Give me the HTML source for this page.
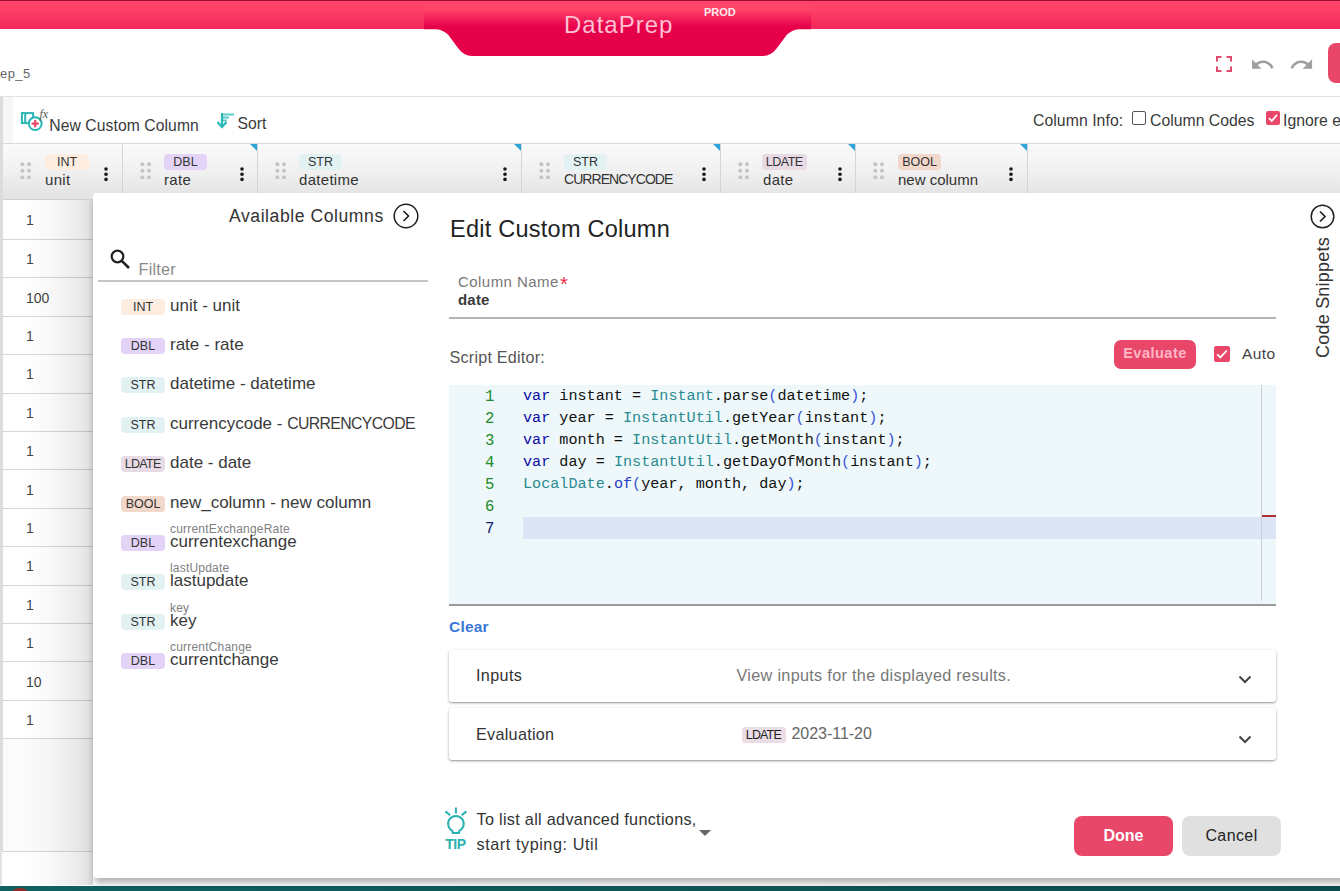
<!DOCTYPE html>
<html><head><meta charset="utf-8">
<style>
*{box-sizing:border-box;margin:0;padding:0}
html,body{width:1340px;height:891px;overflow:hidden;background:#fff;font-family:"Liberation Sans",sans-serif;color:#333;position:relative}
.a{position:absolute;white-space:nowrap}
#topbar{left:0;top:0;width:1340px;height:29.3px;background:linear-gradient(#ff466a,#ff4066 30%,#f0285a);border-top:1px solid #9c0a30}
#tab{left:424px;top:0;width:387px;height:57px}
#hdrline{left:0;top:96px;width:1340px;height:1px;background:#e3e3e3}
#leftstrip{left:0;top:97px;width:3px;height:755px;background:#dcdcdc}
#tbstrip{left:3px;top:97px;width:10px;height:46px;background:#f6f6f6}
.tb{font-size:15px;color:#3a3a3a}
#colhdr{left:3px;top:143px;width:1337px;height:57px;background:linear-gradient(#fafafa 0,#f4f4f4 18px,#ececec 36px,#e4e4e4 50px);border-top:1px solid #dadada;border-bottom:1px solid #d0d0d0}
.hc{position:absolute;top:0;height:56px;border-right:1px solid #d4d4d4}
.badge{position:absolute;height:16px;line-height:16.5px;font-size:12.5px;text-align:center;border-radius:4px;color:#333}
.int{background:#fcede0}.dbl{background:#e2d3f7}.str{background:#e2f1f2}.ldate{background:#e9dbe5}.bool{background:#f2d7cb}
.hname{position:absolute;top:27px;font-size:15px;color:#333;letter-spacing:0.3px}
.drag{position:absolute;top:17.2px}
.kebab{position:absolute;top:23px}
.tri{position:absolute;top:0;right:0;width:0;height:0;border-top:7px solid #2ea6d8;border-left:7px solid transparent}
.rline{position:absolute;left:3px;width:100px;height:1px;background:#d6d6d6}
.rv{position:absolute;left:26px;font-size:14px;color:#444}
#modal{left:93px;top:193px;width:1300px;height:685px;background:#fff;border-radius:4px 0 0 4px;box-shadow:0 7px 6px -2px rgba(0,0,0,.3)}
.li{position:absolute;left:0;font-size:17px;color:#333}
.lb{position:absolute;left:121px;width:44px;height:16px;line-height:17px;font-size:12.5px;text-align:center;border-radius:4px;color:#333}
.lt{position:absolute;left:170px;font-size:17px;color:#3a3a3a;margin-top:0.8px}
.ls{position:absolute;left:170px;font-size:12px;color:#808080;margin-top:1px;letter-spacing:0.2px}
.code{font-family:"Liberation Mono",monospace;font-size:15px;color:#111}
.ln{position:absolute;left:485px;font-family:"Liberation Mono",monospace;font-size:15.6px;color:#23892c}
.cl{position:absolute;left:523px;font-family:"Liberation Mono",monospace;font-size:15.15px;color:#111;white-space:pre}
.k{color:#0b0ba8}.t{color:#2b8a8f}.p{color:#3b55d6}
.acc{position:absolute;left:449px;width:827px;height:52px;background:#fff;border-radius:3px;box-shadow:0 1px 3px rgba(0,0,0,.32),0 1px 1px rgba(0,0,0,.14)}
</style></head><body>
<div id="topbar" class="a"></div>
<svg class="a" id="tab" width="387" height="57" viewBox="0 0 387 57">
<defs><linearGradient id="tg" x1="0" y1="0" x2="0" y2="57" gradientUnits="userSpaceOnUse"><stop offset="0" stop-color="#ff466a"/><stop offset="0.16" stop-color="#ff4669"/><stop offset="0.47" stop-color="#e6004b"/><stop offset="1" stop-color="#e5004a"/></linearGradient></defs>
<path d="M0 1 H387 V29.3 H376 Q369 29.3 363 34.5 L353 48 Q347 56 339 56 H48 Q40 56 34 48 L24 34.5 Q18 29.3 11 29.3 H0 Z" fill="url(#tg)"/>
</svg>
<div class="a" style="left:564px;top:11px;font-size:24px;color:#ffc0d2;letter-spacing:1px">DataPrep</div>
<div class="a" style="left:704px;top:6px;font-size:11px;font-weight:bold;color:#ffe8ee">PROD</div>
<div class="a" style="left:0;top:66px;font-size:13px;color:#666;letter-spacing:0.4px">ep_5</div>

<!-- header icons -->
<svg class="a" style="left:1216px;top:56px" width="16" height="16" viewBox="0 0 16 16" fill="none" stroke="#e0486c" stroke-width="2">
<path d="M1 5.5V1H5.5M10.5 1H15V5.5M15 10.5V15H10.5M5.5 15H1V10.5"/></svg>
<svg class="a" style="left:1250px;top:52px" width="25.2" height="25.2" viewBox="0 0 24 24"><path fill="#9e9e9e" d="M12.5 8c-2.650 0-5.05.99-6.9 2.6L2 7v9h9l-3.62-3.620c1.39-1.160 3.16-1.880 5.12-1.880 3.54 0 6.55 2.310 7.6 5.5l2.370-.78C21.080 11.030 17.150 8 12.5 8z"/></svg>
<svg class="a" style="left:1289px;top:52px" width="25.2" height="25.2" viewBox="0 0 24 24"><path fill="#9e9e9e" d="M18.4 10.6C16.55 8.99 14.15 8 11.5 8c-4.650 0-8.580 3.030-9.960 7.220L3.9 16c1.050-3.190 4.050-5.5 7.6-5.5 1.950 0 3.730.72 5.120 1.880L13 16h9V7l-3.6 3.6z"/></svg>
<div class="a" style="left:1328px;top:43px;width:30px;height:40px;background:#e8476a;border-radius:8px"></div>

<div id="hdrline" class="a"></div>
<div id="leftstrip" class="a"></div>
<div id="tbstrip" class="a"></div>

<!-- toolbar -->
<svg class="a" style="left:19px;top:107px" width="32" height="28" viewBox="0 0 32 28">
<rect x="2.9" y="6.1" width="11.2" height="10" fill="none" stroke="#2bb5b5" stroke-width="2"/>
<line x1="6.2" y1="6" x2="6.2" y2="16" stroke="#2bb5b5" stroke-width="2"/>
<circle cx="16.2" cy="16.6" r="6.4" fill="#fff" stroke="#2bb5b5" stroke-width="2"/>
<path d="M16.2 13V20.2M12.6 16.6H19.8" stroke="#e8476a" stroke-width="2.2"/>
<text x="20.5" y="10.5" font-family="Liberation Serif" font-style="italic" font-size="12" fill="#555">fx</text>
</svg>
<div class="a tb" style="left:49.3px;top:116.7px;font-size:15.7px;letter-spacing:0.08px">New Custom Column</div>
<svg class="a" style="left:216px;top:112px" width="20" height="17" viewBox="0 0 20 17">
<path d="M6 1V14" stroke="#2bb8b8" stroke-width="2.2"/>
<path d="M1.5 10 L6 15 L10.5 10" fill="none" stroke="#2bb8b8" stroke-width="2.2"/>
<path d="M7 2.5H18M7 5.5H13M7 8.5H11" stroke="#5dcaca" stroke-width="2"/>
</svg>
<div class="a tb" style="left:237.5px;top:114.6px;font-size:15.7px">Sort</div>
<div class="a tb" style="left:1033px;top:112.4px;font-size:15.8px;letter-spacing:0.05px">Column Info:</div>
<div class="a" style="left:1132px;top:111px;width:14px;height:14px;border:1.5px solid #555;border-radius:2px;background:#fff"></div>
<div class="a tb" style="left:1150px;top:112.4px;font-size:15.8px">Column Codes</div>
<svg class="a" style="left:1266px;top:111px" width="14" height="14" viewBox="0 0 14 14"><rect width="14" height="14" rx="2" fill="#e8476a"/><path d="M3 7.2 L5.8 10 L11 3.8" fill="none" stroke="#fff" stroke-width="1.8"/></svg>
<div class="a tb" style="left:1283px;top:112.4px;font-size:15.8px">Ignore e</div>

<!-- column header -->
<div id="colhdr" class="a">
 <div class="hc" style="left:0;width:120px">
  <svg class="drag" style="left:17px" width="12" height="18" viewBox="0 0 12 18" fill="#c4c4c4"><circle cx="2.3" cy="3.2" r="2"/><circle cx="9" cy="3.2" r="2"/><circle cx="2.3" cy="9.7" r="2"/><circle cx="9" cy="9.7" r="2"/><circle cx="2.3" cy="16.4" r="2"/><circle cx="9" cy="16.4" r="2"/></svg>
  <div class="badge int" style="left:42px;top:10px;width:44px">INT</div>
  <div class="hname" style="left:42px">unit</div>
  <svg class="kebab" style="left:100px" width="5" height="15" viewBox="0 0 5 15" fill="#1a1a1a"><circle cx="3" cy="2" r="1.8"/><circle cx="3" cy="7.2" r="1.8"/><circle cx="3" cy="12.4" r="1.8"/></svg>
 </div>
 <div class="hc" style="left:120px;width:135px">
  <svg class="drag" style="left:17px" width="12" height="18" viewBox="0 0 12 18" fill="#c4c4c4"><circle cx="2.3" cy="3.2" r="2"/><circle cx="9" cy="3.2" r="2"/><circle cx="2.3" cy="9.7" r="2"/><circle cx="9" cy="9.7" r="2"/><circle cx="2.3" cy="16.4" r="2"/><circle cx="9" cy="16.4" r="2"/></svg>
  <div class="badge dbl" style="left:41px;top:10px;width:43px">DBL</div>
  <div class="hname" style="left:41px">rate</div>
  <svg class="kebab" style="left:116px" width="5" height="15" viewBox="0 0 5 15" fill="#1a1a1a"><circle cx="3" cy="2" r="1.8"/><circle cx="3" cy="7.2" r="1.8"/><circle cx="3" cy="12.4" r="1.8"/></svg>
  <div class="tri"></div>
 </div>
 <div class="hc" style="left:255px;width:264px">
  <svg class="drag" style="left:17px" width="12" height="18" viewBox="0 0 12 18" fill="#c4c4c4"><circle cx="2.3" cy="3.2" r="2"/><circle cx="9" cy="3.2" r="2"/><circle cx="2.3" cy="9.7" r="2"/><circle cx="9" cy="9.7" r="2"/><circle cx="2.3" cy="16.4" r="2"/><circle cx="9" cy="16.4" r="2"/></svg>
  <div class="badge str" style="left:41px;top:10px;width:43px">STR</div>
  <div class="hname" style="left:41px">datetime</div>
  <svg class="kebab" style="left:244px" width="5" height="15" viewBox="0 0 5 15" fill="#1a1a1a"><circle cx="3" cy="2" r="1.8"/><circle cx="3" cy="7.2" r="1.8"/><circle cx="3" cy="12.4" r="1.8"/></svg>
  <div class="tri"></div>
 </div>
 <div class="hc" style="left:519px;width:199px">
  <svg class="drag" style="left:17px" width="12" height="18" viewBox="0 0 12 18" fill="#c4c4c4"><circle cx="2.3" cy="3.2" r="2"/><circle cx="9" cy="3.2" r="2"/><circle cx="2.3" cy="9.7" r="2"/><circle cx="9" cy="9.7" r="2"/><circle cx="2.3" cy="16.4" r="2"/><circle cx="9" cy="16.4" r="2"/></svg>
  <div class="badge str" style="left:42px;top:10px;width:43px">STR</div>
  <div class="hname" style="left:42px;font-size:14px;letter-spacing:-0.95px">CURRENCYCODE</div>
  <svg class="kebab" style="left:179px" width="5" height="15" viewBox="0 0 5 15" fill="#1a1a1a"><circle cx="3" cy="2" r="1.8"/><circle cx="3" cy="7.2" r="1.8"/><circle cx="3" cy="12.4" r="1.8"/></svg>
  <div class="tri"></div>
 </div>
 <div class="hc" style="left:718px;width:135px">
  <svg class="drag" style="left:17px" width="12" height="18" viewBox="0 0 12 18" fill="#c4c4c4"><circle cx="2.3" cy="3.2" r="2"/><circle cx="9" cy="3.2" r="2"/><circle cx="2.3" cy="9.7" r="2"/><circle cx="9" cy="9.7" r="2"/><circle cx="2.3" cy="16.4" r="2"/><circle cx="9" cy="16.4" r="2"/></svg>
  <div class="badge ldate" style="left:41px;top:10px;width:45px;letter-spacing:-0.5px;text-indent:-0.5px">LDATE</div>
  <div class="hname" style="left:42px">date</div>
  <svg class="kebab" style="left:116px" width="5" height="15" viewBox="0 0 5 15" fill="#1a1a1a"><circle cx="3" cy="2" r="1.8"/><circle cx="3" cy="7.2" r="1.8"/><circle cx="3" cy="12.4" r="1.8"/></svg>
  <div class="tri"></div>
 </div>
 <div class="hc" style="left:853px;width:172px">
  <svg class="drag" style="left:17px" width="12" height="18" viewBox="0 0 12 18" fill="#c4c4c4"><circle cx="2.3" cy="3.2" r="2"/><circle cx="9" cy="3.2" r="2"/><circle cx="2.3" cy="9.7" r="2"/><circle cx="9" cy="9.7" r="2"/><circle cx="2.3" cy="16.4" r="2"/><circle cx="9" cy="16.4" r="2"/></svg>
  <div class="badge bool" style="left:42px;top:10px;width:43px">BOOL</div>
  <div class="hname" style="left:42px;letter-spacing:0">new column</div>
  <svg class="kebab" style="left:152px" width="5" height="15" viewBox="0 0 5 15" fill="#1a1a1a"><circle cx="3" cy="2" r="1.8"/><circle cx="3" cy="7.2" r="1.8"/><circle cx="3" cy="12.4" r="1.8"/></svg>
  <div class="tri"></div>
 </div>
</div>

<!-- rows -->
<div class="rline" style="top:239px"></div>
<div class="rv a" style="top:212px">1</div>
<div class="rline" style="top:277px"></div>
<div class="rv a" style="top:251px">1</div>
<div class="rline" style="top:316px"></div>
<div class="rv a" style="top:290px">100</div>
<div class="rline" style="top:354px"></div>
<div class="rv a" style="top:328px">1</div>
<div class="rline" style="top:393px"></div>
<div class="rv a" style="top:366px">1</div>
<div class="rline" style="top:431px"></div>
<div class="rv a" style="top:405px">1</div>
<div class="rline" style="top:469px"></div>
<div class="rv a" style="top:443px">1</div>
<div class="rline" style="top:508px"></div>
<div class="rv a" style="top:482px">1</div>
<div class="rline" style="top:546px"></div>
<div class="rv a" style="top:520px">1</div>
<div class="rline" style="top:585px"></div>
<div class="rv a" style="top:558px">1</div>
<div class="rline" style="top:623px"></div>
<div class="rv a" style="top:597px">1</div>
<div class="rline" style="top:661px"></div>
<div class="rv a" style="top:635px">1</div>
<div class="rline" style="top:700px"></div>
<div class="rv a" style="top:674px">10</div>
<div class="rline" style="top:738px"></div>
<div class="rv a" style="top:712px">1</div>
<div class="a" style="left:3px;top:739px;width:100px;height:112px;background:#fbfbfb"></div>
<div class="rline" style="top:851px"></div>
<div class="a" style="left:0;top:851px;width:2px;height:34px;background:#e2e2e2"></div>
<div class="a" style="left:3px;top:200px;width:90px;height:685px;background:linear-gradient(90deg,rgba(0,0,0,0) 0,rgba(0,0,0,0) 25%,rgba(0,0,0,.025) 50%,rgba(0,0,0,.07) 80%,rgba(0,0,0,.11) 93%,rgba(0,0,0,.17) 100%)"></div>
<div class="a" style="left:0;top:886px;width:1340px;height:5px;background:linear-gradient(90deg,#0f6060,#0c4c4c)"></div>
<div class="a" style="left:12px;top:888px;width:16px;height:10px;border-radius:50%;background:#8a2a2a"></div>
<!-- modal -->
<div id="modal" class="a"></div>
<!-- available columns -->
<div class="a" style="left:229px;top:206px;font-size:17.6px;color:#333;letter-spacing:0.55px">Available Columns</div>
<svg class="a" style="left:393px;top:203px" width="26" height="26" viewBox="0 0 26 26"><circle cx="13" cy="13" r="11.8" fill="none" stroke="#222" stroke-width="1.5"/><path d="M10.5 8 L15.5 13 L10.5 18" fill="none" stroke="#222" stroke-width="1.7"/></svg>
<svg class="a" style="left:110px;top:249px" width="21" height="20" viewBox="0 0 21 20"><circle cx="7.5" cy="7.5" r="5.8" fill="none" stroke="#222" stroke-width="2.2"/><path d="M11.8 11.8 L19 19" stroke="#222" stroke-width="2.6"/></svg>
<div class="a" style="left:138.5px;top:259.7px;font-size:16.2px;color:#8a8a8a;letter-spacing:0.25px">Filter</div>
<div class="a" style="left:98px;top:280px;width:330px;height:2px;background:#c4c4c4"></div>

<div class="lb int" style="top:299px">INT</div><div class="lt a" style="top:295px">unit - unit</div>
<div class="lb dbl" style="top:338px">DBL</div><div class="lt a" style="top:334px">rate - rate</div>
<div class="lb str" style="top:377px">STR</div><div class="lt a" style="top:373px">datetime - datetime</div>
<div class="lb str" style="top:417px">STR</div><div class="lt a" style="top:413px">currencycode - <span style="font-size:15.8px;letter-spacing:-0.62px">CURRENCYCODE</span></div>
<div class="lb ldate" style="top:456px;letter-spacing:-0.7px;text-indent:-0.7px">LDATE</div><div class="lt a" style="top:452px">date - date</div>
<div class="lb bool" style="top:496px">BOOL</div><div class="lt a" style="top:492px">new_column - new column</div>
<div class="lb dbl" style="top:535px">DBL</div><div class="ls a" style="top:521px">currentExchangeRate</div><div class="lt a" style="top:531px">currentexchange</div>
<div class="lb str" style="top:574px">STR</div><div class="ls a" style="top:560px">lastUpdate</div><div class="lt a" style="top:570px">lastupdate</div>
<div class="lb str" style="top:614px">STR</div><div class="ls a" style="top:600px">key</div><div class="lt a" style="top:610px">key</div>
<div class="lb dbl" style="top:653px">DBL</div><div class="ls a" style="top:639px">currentChange</div><div class="lt a" style="top:649px">currentchange</div>

<!-- edit custom column -->
<div class="a" style="left:450px;top:215.6px;font-size:23.5px;color:#222;letter-spacing:0.25px">Edit Custom Column</div>
<div class="a" style="left:458px;top:273px;font-size:15px;color:#777;letter-spacing:0.45px">Column Name</div>
<div class="a" style="left:560px;top:273px;font-size:20px;color:#e8304f">*</div>
<div class="a" style="left:458px;top:291px;font-size:15px;color:#3a3a3a;font-weight:bold;letter-spacing:0.2px">date</div>
<div class="a" style="left:449px;top:317px;width:827px;height:1.5px;background:#b4b4b4"></div>

<div class="a" style="left:449.5px;top:347.9px;font-size:16.2px;color:#555;letter-spacing:0.2px">Script Editor:</div>
<div class="a" style="left:1114px;top:340px;width:82px;height:29px;background:#e8476a;border-radius:7px;color:#ffb6c6;font-weight:bold;font-size:14.5px;text-align:center;line-height:26px;letter-spacing:0.5px">Evaluate</div>
<svg class="a" style="left:1214px;top:346px" width="16" height="16" viewBox="0 0 16 16"><rect width="16" height="16" rx="2" fill="#e8476a"/><path d="M3.2 8.3 L6.4 11.4 L12.8 4.5" fill="none" stroke="#fff" stroke-width="1.8"/></svg>
<div class="a" style="left:1242px;top:345px;font-size:15.5px;color:#444;letter-spacing:0.4px">Auto</div>

<svg class="a" style="left:1310px;top:204px" width="25" height="25" viewBox="0 0 25 25"><circle cx="12.5" cy="12.5" r="11.3" fill="none" stroke="#222" stroke-width="1.5"/><path d="M10 7.5 L15 12.5 L10 17.5" fill="none" stroke="#222" stroke-width="1.7"/></svg>
<div class="a" style="left:1313px;top:358px;transform-origin:0 0;transform:rotate(-90deg);font-size:18px;color:#333;letter-spacing:0.22px">Code Snippets</div>

<!-- code editor -->
<div class="a" style="left:449px;top:385px;width:827px;height:219px;background:#eef8fa"></div>
<div class="a" style="left:523px;top:517px;width:753px;height:22px;background:#dce5f6"></div>
<div class="a" style="left:1261px;top:385px;width:1px;height:216px;background:#c8d0d4"></div>
<div class="a" style="left:1262px;top:515px;width:14px;height:2px;background:#b03030"></div>
<div class="a" style="left:449px;top:604px;width:827px;height:2px;background:#9a9a9a"></div>
<div class="ln" style="top:388px;color:#23892c">1</div>
<div class="cl" style="top:387px"><span class="k">var</span> instant = <span class="t">Instant</span>.parse<span class="p">(</span>datetime<span class="p">)</span>;</div>
<div class="ln" style="top:410px;color:#23892c">2</div>
<div class="cl" style="top:409px"><span class="k">var</span> year = <span class="t">InstantUtil</span>.getYear<span class="p">(</span>instant<span class="p">)</span>;</div>
<div class="ln" style="top:432px;color:#23892c">3</div>
<div class="cl" style="top:431px"><span class="k">var</span> month = <span class="t">InstantUtil</span>.getMonth<span class="p">(</span>instant<span class="p">)</span>;</div>
<div class="ln" style="top:454px;color:#23892c">4</div>
<div class="cl" style="top:453px"><span class="k">var</span> day = <span class="t">InstantUtil</span>.getDayOfMonth<span class="p">(</span>instant<span class="p">)</span>;</div>
<div class="ln" style="top:476px;color:#23892c">5</div>
<div class="cl" style="top:475px"><span class="t">LocalDate</span>.<span style="color:#2a3ac4">of</span><span class="p">(</span>year, month, day<span class="p">)</span>;</div>
<div class="ln" style="top:498px;color:#23892c">6</div>
<div class="ln" style="top:520px;color:#0b216f">7</div>
<div class="a" style="left:449px;top:618px;font-size:15.5px;color:#3a78d8;font-weight:bold;letter-spacing:0.2px">Clear</div>
<div class="acc" style="top:650px"></div>
<div class="a" style="left:476px;top:666px;font-size:16.2px;color:#333;letter-spacing:0.36px">Inputs</div>
<div class="a" style="left:736.5px;top:665.8px;font-size:16.2px;color:#777;letter-spacing:0.32px">View inputs for the displayed results.</div>
<svg class="a" style="left:1238px;top:674.5px" width="14" height="9" viewBox="0 0 14 9"><path d="M1.5 1.5 L7 7 L12.5 1.5" fill="none" stroke="#444" stroke-width="2"/></svg>
<div class="acc" style="top:708px"></div>
<div class="a" style="left:476px;top:724.5px;font-size:16.2px;color:#333;letter-spacing:0.28px">Evaluation</div>
<div class="a" style="left:742px;top:726.5px;width:43.5px;height:16.5px;line-height:17px;background:#eadde6;border-radius:3px;font-size:12.4px;color:#222;text-align:center;letter-spacing:-0.8px;text-indent:-0.8px">LDATE</div>
<div class="a" style="left:791.5px;top:725.3px;font-size:16px;color:#666;letter-spacing:-0.03px">2023-11-20</div>
<svg class="a" style="left:1238px;top:734.5px" width="14" height="9" viewBox="0 0 14 9"><path d="M1.5 1.5 L7 7 L12.5 1.5" fill="none" stroke="#444" stroke-width="2"/></svg>

<svg class="a" style="left:443px;top:806px" width="26" height="46" viewBox="0 0 26 46">
<path d="M12.9 1.5V7.5M2.4 5.4L7.2 9.3M23.4 5.4L18.6 9.3" stroke="#2bb3b3" stroke-width="2"/>
<path d="M9.6 27V24.9A7.8 7.8 0 1 1 16.2 24.9V27Z" fill="none" stroke="#2bb3b3" stroke-width="2" stroke-linejoin="round"/>
<text x="2.2" y="43" font-family="Liberation Sans" font-weight="bold" font-size="14" letter-spacing="-0.5" fill="#2bb3b3">TIP</text>
</svg>
<div class="a" style="left:476.5px;top:810.2px;font-size:16.2px;color:#333;letter-spacing:0.31px">To list all advanced functions,</div>
<div class="a" style="left:476.5px;top:834.6px;font-size:16.2px;color:#333;letter-spacing:0.57px">start typing: Util</div>
<svg class="a" style="left:699px;top:830px" width="12" height="7" viewBox="0 0 12 7"><path d="M0 0 H12 L6 6 Z" fill="#666"/></svg>
<div class="a" style="left:1074px;top:816px;width:99px;height:40px;background:#e8476a;border-radius:8px;color:#fff;font-weight:bold;font-size:16px;text-align:center;line-height:40px">Done</div>
<div class="a" style="left:1182px;top:816px;width:99px;height:40px;background:#e0e0e0;border-radius:8px;color:#222;font-size:16px;text-align:center;line-height:40px;letter-spacing:0.4px">Cancel</div>

</body></html>
